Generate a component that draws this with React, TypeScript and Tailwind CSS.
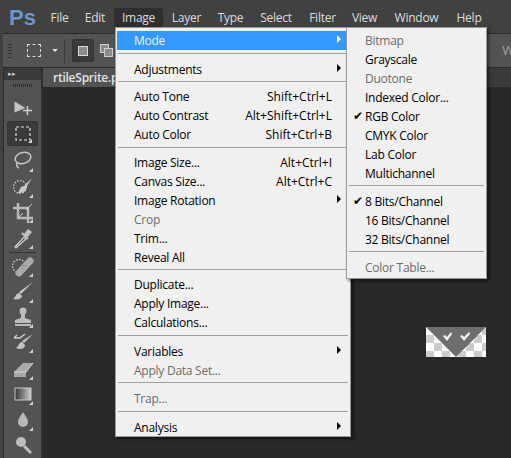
import React from "react";

type Row = { t?: string; k?: string; dis?: boolean; arrow?: boolean; active?: boolean; check?: boolean; sep?: string };

const mainRows: Row[] = [
  { t: "Mode", arrow: true, active: true },
  { sep: "mt-[3px] mb-[6px]" },
  { t: "Adjustments", arrow: true },
  { sep: "mt-[2px] mb-[5px]" },
  { t: "Auto Tone", k: "Shift+Ctrl+L" },
  { t: "Auto Contrast", k: "Alt+Shift+Ctrl+L" },
  { t: "Auto Color", k: "Shift+Ctrl+B" },
  { sep: "mt-[3px] mb-[5px]" },
  { t: "Image Size...", k: "Alt+Ctrl+I" },
  { t: "Canvas Size...", k: "Alt+Ctrl+C" },
  { t: "Image Rotation", arrow: true },
  { t: "Crop", dis: true },
  { t: "Trim..." },
  { t: "Reveal All" },
  { sep: "mt-[2px] mb-[5px]" },
  { t: "Duplicate..." },
  { t: "Apply Image..." },
  { t: "Calculations..." },
  { sep: "mt-[3px] mb-[6px]" },
  { t: "Variables", arrow: true },
  { t: "Apply Data Set...", dis: true },
  { sep: "mt-[2px] mb-[6px]" },
  { t: "Trap...", dis: true },
  { sep: "mt-[3px] mb-[6px]" },
  { t: "Analysis", arrow: true },
];

const subRows: Row[] = [
  { t: "Bitmap", dis: true },
  { t: "Grayscale" },
  { t: "Duotone", dis: true },
  { t: "Indexed Color..." },
  { t: "RGB Color", check: true },
  { t: "CMYK Color" },
  { t: "Lab Color" },
  { t: "Multichannel" },
  { sep: "mt-[2px] mb-[6px]" },
  { t: "8 Bits/Channel", check: true },
  { t: "16 Bits/Channel" },
  { t: "32 Bits/Channel" },
  { sep: "mt-[2px] mb-[6px]" },
  { t: "Color Table...", dis: true },
];

function MenuRow({ r }: { r: Row }) {
  if (r.sep) return <div className={"mx-px h-px bg-[#a0a0a0] " + r.sep} />;
  return (
    <div
      className={
        "relative flex h-[19px] items-center justify-between pl-[17px] leading-[19px] " +
        (r.active ? "bg-[#3399ff] text-[#f0f0f0]" : r.dis ? "text-[#6d6d6d]" : "text-[#000000]")
      }
    >
      {r.check && <span className="absolute left-[5px] top-0 text-[12px] font-['DejaVu_Sans',sans-serif]">✔</span>}
      <span>{r.t}</span>
      {r.k && <span className="mr-[17px] tracking-normal">{r.k}</span>}
      {r.arrow && (
        <span
          className={
            "absolute right-[8px] top-[4px] h-0 w-0 border-y-[4px] border-l-[4px] border-y-transparent " +
            (r.active ? "border-l-white" : "border-l-black")
          }
        />
      )}
    </div>
  );
}

const Corner = () => <span className="absolute right-[5px] bottom-[2px] h-0 w-0 border-b-[4px] border-l-[4px] border-b-[#d0d0d0] border-l-transparent" />;

function Tool({ h, sel, children, corner = true }: { h: string; sel?: boolean; children: React.ReactNode; corner?: boolean }) {
  return (
    <div className={"relative mx-[3px] flex items-center justify-center " + h + (sel ? " mb-[2px] rounded-[2px] border border-[#333333] bg-[#3a3a3a]" : "")}>
      <svg width="24" height="24" viewBox="0 0 24 24">{children}</svg>
      {corner && <Corner />}
    </div>
  );
}

const menuNames: [string, string][] = [
  ["File", "w-[33px]"],
  ["Edit", "w-[38px]"],
  ["Image", "w-[49px]"],
  ["Layer", "w-[47px]"],
  ["Type", "w-[41px]"],
  ["Select", "w-[50px]"],
  ["Filter", "w-[43px]"],
  ["View", "w-[41px]"],
  ["Window", "w-[63px]"],
  ["Help", "w-[42px]"],
];

export default function App() {
  return (
    <div className="relative h-[458px] w-[511px] overflow-hidden bg-[#414141] text-[12px] font-['Open_Sans',sans-serif] tracking-[-0.25px]">
      {/* Title bar */}
      <div className="flex h-[33px] items-start pl-[9px] pt-[8px]">
        <span className="w-[34px] text-[22px] font-bold leading-[19px] text-[#6a97c4] font-['Liberation_Sans',sans-serif] tracking-normal">Ps</span>
        <div className="flex items-center text-[#dcdcdc]">
          {menuNames.map(([n, w]) => (
            <span
              key={n}
              className={
                "flex h-[19px] items-center justify-center rounded-[2px] " +
                w +
                (n === "Image" ? " bg-[#2f2f2f]" : "")
              }
            >
              {n}
            </span>
          ))}
        </div>
      </div>
      {/* Options bar */}
      <div className="ml-[3px] flex h-[35px] items-center overflow-hidden border-y border-[#2b2b2b] bg-[#535353] pl-[5px]">
        <div className="flex h-[14px] w-[4px] flex-col justify-between">
          {[0, 1, 2, 3, 4].map((i) => (
            <div key={i} className="h-px bg-[#333333]" />
          ))}
        </div>
        <div className="ml-[15px] h-[13px] w-[14px] border border-dashed border-[#d6d6d6]" />
        <span className="ml-[11px] h-0 w-0 border-x-[3px] border-t-[3px] border-x-transparent border-t-[#e0e0e0]" />
        <div className="ml-[6px] h-[24px] w-px bg-[#3d3d3d]" />
        <div className="ml-[7px] flex h-[23px] w-[22px] items-center justify-center rounded-[2px] border border-[#333333] bg-[#3a3a3a]">
          <div className="h-[10px] w-[10px] border border-[#d8d8d8] bg-[#8c8c8c]" />
        </div>
        <div className="relative ml-[6px] h-[14px] w-[14px]">
          <div className="absolute left-0 top-0 h-[9px] w-[9px] border border-[#cfcfcf] bg-[#8c8c8c]" />
          <div className="absolute left-[4px] top-[4px] h-[9px] w-[9px] border border-[#cfcfcf] bg-[#8c8c8c]" />
        </div>
        <div className="ml-auto mr-[-6px] text-[13px] text-[#9aa0a6]">Wi</div>
      </div>
      {/* Body */}
      <div className="ml-[3px] flex h-[390px] border-l border-[#2b2b2b]">
        {/* Tools */}
        <div className="flex w-[39px] flex-col border-r-2 border-[#2f2f2f] bg-[#535353]">
          <div className="flex h-[12px] items-center bg-[#3a3a3a] pl-[4px] text-[7px] leading-none text-[#cfcfcf]">▸▸</div>
          <div className="mx-auto mt-[4px] mb-[7px] h-[3px] w-[20px] bg-[repeating-linear-gradient(90deg,#2e2e2e_0,#2e2e2e_1px,transparent_1px,transparent_2px)]" />
          <Tool h="h-[28px]" corner={false}>
            <path d="M3.5 6.5v11l11-4.5z" fill="#c4c4c4" />
            <path d="M16.5 11v9M12 15.5h9" stroke="#d0d0d0" strokeWidth="1.5" />
          </Tool>
          <Tool h="h-[25px]" sel>
            <rect x="5" y="5" width="14" height="13" fill="none" stroke="#e0e0e0" strokeWidth="1.2" strokeDasharray="3 2" />
          </Tool>
          <Tool h="h-[27px]">
            <ellipse cx="12" cy="9" rx="8" ry="5.5" fill="none" stroke="#c4c4c4" strokeWidth="1.5" transform="rotate(-15 12 9)" />
            <path d="M6 13c-1 3 0 5 2 6" fill="none" stroke="#c4c4c4" strokeWidth="1.5" />
          </Tool>
          <Tool h="h-[26px]">
            <circle cx="9" cy="12" r="6.5" fill="none" stroke="#d0d0d0" strokeWidth="1.2" strokeDasharray="1.5 1.5" />
            <path d="M21 3l-8 8-3 1-3 6c4 0 8-1 8-4l1-3z" fill="#c8c8c8" />
          </Tool>
          <Tool h="h-[26px]">
            <path d="M7 2v15h15M2 7h15v15" fill="none" stroke="#b8b8b8" strokeWidth="2.5" />
            <path d="M8 16L21 3" stroke="#d0d0d0" strokeWidth="1" />
            <path d="M9 9h6v6z" fill="#555" />
          </Tool>
          <Tool h="h-[26px]">
            <path d="M4 21l9-10 2 2-10 9z" fill="none" stroke="#d0d0d0" strokeWidth="1.2" />
            <path d="M12 9l5-6 4 3-5 6z" fill="#c0c0c0" />
            <path d="M11 7l6 6" stroke="#c0c0c0" strokeWidth="2" />
          </Tool>
          <div className="mx-[5px] my-[1px] h-px bg-[#353535]" />
          <Tool h="h-[26px]">
            <circle cx="8" cy="12" r="6.5" fill="none" stroke="#d8d8d8" strokeWidth="1.2" strokeDasharray="1.5 1.5" />
            <path d="M8 19l11-12" stroke="#aaaaaa" strokeWidth="7" strokeLinecap="round" />
            <path d="M11 14l1 1M14 11l1 1M12 11l1 1" stroke="#666" strokeWidth="1" />
          </Tool>
          <Tool h="h-[26px]">
            <path d="M22 2L10 14l-2-2z" fill="#c4c4c4" />
            <path d="M8 13c-3 0-3 4-6 6 4 1 9 0 9-3z" fill="#c4c4c4" />
          </Tool>
          <Tool h="h-[26px]">
            <circle cx="12" cy="6" r="3.5" fill="#bdbdbd" />
            <path d="M10 9h4v4l6 2v3H4v-3l6-2z" fill="#bdbdbd" />
            <path d="M4 20h16" stroke="#dcdcdc" strokeWidth="1.5" />
          </Tool>
          <Tool h="h-[26px]">
            <path d="M22 3L13 12l-2-2z" fill="#c4c4c4" />
            <path d="M11 11c-3 0-3 4-6 6 4 2 9 1 9-3z" fill="#c4c4c4" />
            <path d="M3 7h7M3 7l3-3M14 3l-5 4" stroke="#d0d0d0" strokeWidth="1.4" fill="none" />
          </Tool>
          <Tool h="h-[27px]">
            <path d="M3 15L12 6h10l-7 9v5H3z" fill="#a8a8a8" />
            <path d="M3 15h12l7-9" stroke="#dadada" strokeWidth="1" fill="none" />
          </Tool>
          <Tool h="h-[26px]">
            <defs>
              <linearGradient id="g" x1="0" x2="1" y1="0" y2="0">
                <stop offset="0" stopColor="#333" />
                <stop offset="1" stopColor="#cfcfcf" />
              </linearGradient>
            </defs>
            <rect x="4" y="6" width="16" height="12" fill="url(#g)" stroke="#c8c8c8" />
          </Tool>
          <Tool h="h-[26px]">
            <path d="M12 4c-3 5-5 7-5 10a5 5 0 0 0 10 0c0-3-2-5-5-10z" fill="#b8b8b8" />
          </Tool>
          <Tool h="h-[26px]" corner={false}>
            <circle cx="10" cy="9" r="5" fill="#bdbdbd" />
            <path d="M13 13l7 7" stroke="#bdbdbd" strokeWidth="3" />
          </Tool>
        </div>
        {/* Document */}
        <div className="flex flex-1 flex-col bg-[#282828]">
          <div className="flex h-[19px] items-center bg-[#3a3a3a]">
            <div className="flex h-[19px] w-[72px] items-center overflow-hidden whitespace-nowrap bg-[#535353] pl-[10px] font-semibold text-[#e4e4e4]">rtileSprite.p</div>
          </div>
          <div className="ml-[383px] mt-[240px] h-[30px] w-[60px]">
            <svg width="60" height="30" viewBox="0 0 60 30">
              <rect width="60" height="30" fill="#ffffff" />
              {[0, 1, 2, 3, 4, 5, 6, 7].map((c) =>
                [0, 1, 2, 3].map((r) =>
                  (c + r) % 2 === 1 ? <rect key={c + "-" + r} x={c * 8} y={r * 8} width="8" height="8" fill="#cccccc" /> : null
                )
              )}
              <path d="M0 0h60L30 30z" fill="#6e6e6e" />
              <path d="M17 9l2-1 2 2 4-5 1 2-5 7zM34 9l2-1 2 2 5-5 1 2-6 7z" fill="#f2f2f2" />
            </svg>
          </div>
        </div>
      </div>

      {/* Image menu */}
      <div className="absolute left-[115px] top-[27px] h-[410px] w-[236px] border border-[#9a9a9a] bg-[#f0f0f0] px-px pt-[3px] shadow-[2px_2px_3px_rgba(0,0,0,0.5)]">
        {mainRows.map((r, i) => (
          <MenuRow key={i} r={r} />
        ))}
      </div>
      {/* Mode submenu */}
      <div className="absolute left-[346px] top-[27px] h-[252px] w-[141px] border border-[#9a9a9a] bg-[#f0f0f0] px-px pt-[3px] shadow-[2px_2px_3px_rgba(0,0,0,0.5)]">
        {subRows.map((r, i) => (
          <MenuRow key={i} r={r} />
        ))}
      </div>
    </div>
  );
}
